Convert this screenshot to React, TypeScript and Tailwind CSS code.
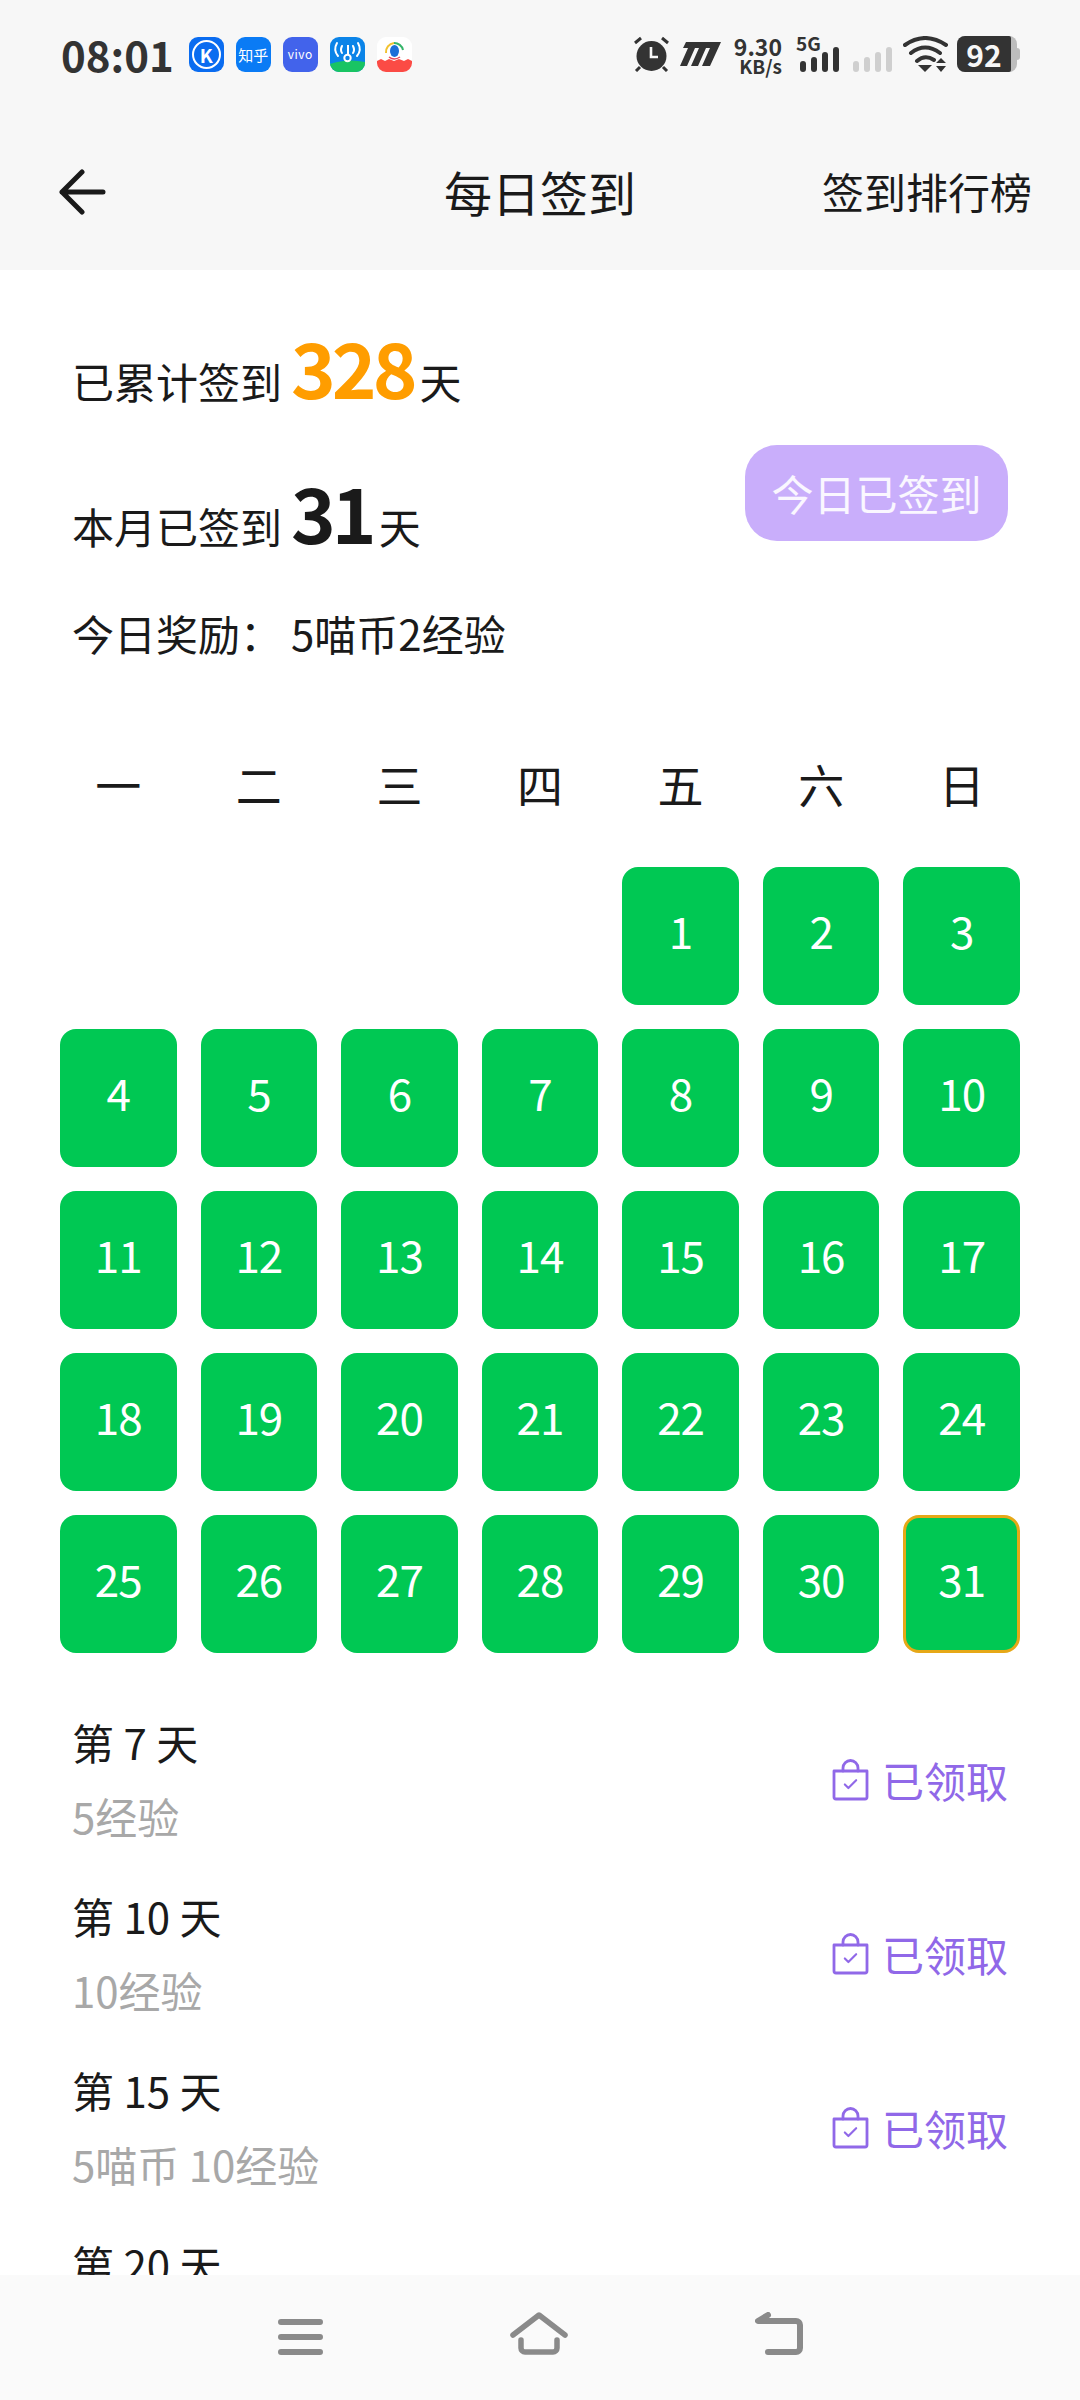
import { Check } from 'lucide-react'

const font = { fontFamily: '"Noto Sans CJK SC", "Noto Sans", sans-serif' }

const weekdays = ['一', '二', '三', '四', '五', '六', '日']
const days = Array.from({ length: 31 }, (_, i) => i + 1)

const rewards = [
  { day: 7, text: '5经验' },
  { day: 10, text: '10经验' },
  { day: 15, text: '5喵币 10经验' },
  { day: 20, text: '10喵币 10经验' },
]

function AppIcons() {
  return (
    <div className="flex items-center gap-[12px] ml-[15px]">
      <div className="w-[35px] h-[35px] rounded-[9px] bg-[#0a6cf0] flex items-center justify-center">
        <div className="w-[29px] h-[29px] rounded-full border-2 border-white flex items-center justify-center text-white text-[19px] font-bold leading-none">K</div>
      </div>
      <div className="w-[35px] h-[35px] rounded-[9px] bg-[#0a7bf5] flex items-center justify-center text-white text-[15px] leading-none whitespace-nowrap">知乎</div>
      <div className="w-[35px] h-[35px] rounded-[9px] bg-[#4263eb] flex items-center justify-center text-white text-[12px] leading-none tracking-[0.5px]">vivo</div>
      <svg width="35" height="35" viewBox="0 0 35 35">
        <rect width="35" height="35" rx="9" fill="#0b84e8" />
        <path d="M0 27 Q17 21 35 25 V26 a9 9 0 0 1 -9 9 H9 a9 9 0 0 1 -9 -9Z" fill="#19c463" />
        <path d="M7 6 Q3 13 8 19 M12 9 Q10 13 12 16 M28 6 Q32 13 27 19 M23 9 Q25 13 23 16" fill="none" stroke="#fff" strokeWidth="2" strokeLinecap="round" />
        <path d="M18 8 V18" stroke="#fff" strokeWidth="2" />
        <circle cx="17.5" cy="21" r="3.2" fill="none" stroke="#fff" strokeWidth="2" />
      </svg>
      <svg width="35" height="35" viewBox="0 0 35 35">
        <rect width="35" height="35" rx="9" fill="#fff" />
        <path d="M0 24 L4 22 L8 24 L12 22 L17 24 L22 22 L27 24 L31 22 L35 24 V26 a9 9 0 0 1 -9 9 H9 a9 9 0 0 1 -9 -9Z" fill="#fb4b45" />
        <path d="M9 16 A9 9 0 0 1 17 6" fill="none" stroke="#f2c230" strokeWidth="2" />
        <path d="M17 6 A9 9 0 0 1 26 13" fill="none" stroke="#35b56a" strokeWidth="2" />
        <ellipse cx="17.5" cy="14" rx="4.5" ry="6" fill="#1c6fd8" />
        <path d="M12 20 Q17 24 23 20" fill="none" stroke="#e8465a" strokeWidth="1.5" />
      </svg>
    </div>
  )
}

function StatusRight() {
  return (
    <div className="flex items-center text-[#333]">
      <svg width="37" height="36" viewBox="0 0 37 36" className="mr-[10px]">
        <circle cx="18.5" cy="20" r="15" fill="#333" />
        <path d="M18 11 V21 H25" fill="none" stroke="#f7f7f7" strokeWidth="2.6" />
        <path d="M2 7 L8 2 M35 7 L29 2 M7 31 L3 35 M30 31 L34 35" stroke="#333" strokeWidth="3" />
      </svg>
      <svg width="41" height="24" viewBox="0 0 41 24" className="mr-[16px]">
        <path d="M6 0 H41 L30 24 H22 L30 6 H26 L18 24 H11 L19 6 H15 L7 24 H0 L8 6 H3Z" fill="#333" />
      </svg>
      <div className="flex flex-col items-end font-bold leading-none w-[45px] mr-[17px]">
        <span className="text-[23px] h-[23px] leading-[20px]">9.30</span>
        <span className="text-[19px] h-[14px] leading-[14px]">KB/s</span>
      </div>
      <div className="relative w-[41px] h-[36px] mr-[12px]">
        <span className="absolute left-[-3px] top-[-2px] text-[19px] font-bold leading-[18px]">5G</span>
        <svg width="41" height="36" viewBox="0 0 41 36">
          <rect x="1" y="25" width="6" height="11" rx="3" fill="#333" />
          <rect x="12" y="21" width="6" height="15" rx="3" fill="#333" />
          <rect x="23" y="16" width="6" height="20" rx="3" fill="#333" />
          <rect x="34" y="11" width="6" height="25" rx="3" fill="#333" />
        </svg>
      </div>
      <svg width="41" height="36" viewBox="0 0 41 36" className="mr-[10px]">
        <rect x="1" y="25" width="6" height="11" rx="3" fill="#cfcfcf" />
        <rect x="12" y="21" width="6" height="15" rx="3" fill="#cfcfcf" />
        <rect x="23" y="16" width="6" height="20" rx="3" fill="#cfcfcf" />
        <rect x="34" y="11" width="6" height="25" rx="3" fill="#cfcfcf" />
      </svg>
      <svg width="45" height="36" viewBox="0 0 45 36" className="mr-[9px]">
        <path d="M2 9 Q22 -5 43 9 M8 17 Q22 6 37 17 M14 25 Q22 18 31 24" fill="none" stroke="#333" strokeWidth="4" strokeLinecap="round" />
        <path d="M15 29 H29 L22 36Z" fill="#333" />
        <path d="M33 27 L38 22 L43 27Z M33 30 H43 L38 36Z" fill="#333" />
      </svg>
      <div className="relative w-[60px] h-[36px] rounded-[8px] bg-[#bdbdbd] mr-[3px]">
        <div className="w-[54px] h-[36px] rounded-l-[8px] rounded-r-[2px] bg-[#333] flex items-center justify-center text-[#f7f7f7] text-[30px] font-bold leading-none">92</div>
        <div className="absolute right-[-3px] top-[12px] w-[3px] h-[12px] rounded-r-[3px] bg-[#bdbdbd]" />
      </div>
    </div>
  )
}

function Header() {
  return (
    <div className="bg-[#f7f7f7] h-[270px] shrink-0">
      <div className="h-[108px] pl-[61px] pr-[60px] flex items-center justify-between">
        <div className="flex items-center">
          <span className="text-[42px] font-bold leading-none text-[#333]">08:01</span>
          <AppIcons />
        </div>
        <StatusRight />
      </div>
      <div className="relative h-[162px] pt-[3px] flex items-center justify-between pl-[58px] pr-[48px]">
        <svg width="48" height="46" viewBox="0 0 48 46" className="mt-[2px]">
          <path d="M24 3 L4 23 L24 43 M4 23 H45" fill="none" stroke="#1a1a1a" strokeWidth="5" strokeLinecap="round" strokeLinejoin="round" />
        </svg>
        <span className="absolute left-0 right-0 text-center text-[48px] leading-none text-[#1a1a1a]">每日签到</span>
        <span className="text-[42px] leading-none text-[#1a1a1a]">签到排行榜</span>
      </div>
    </div>
  )
}

function Summary() {
  return (
    <div className="flex items-center justify-between pl-[72px] pr-[72px] pt-[58px]">
      <div className="text-[#1a1a1a] text-[42px] leading-none">
        <div className="flex items-baseline h-[94px]">
          <span>已累计签到</span>
          <span className="text-[#ff9d00] text-[76px] font-bold ml-[9px] mr-[6px] tracking-[-4px]">328</span>
          <span>天</span>
        </div>
        <div className="flex items-baseline h-[94px] mt-[51px]">
          <span>本月已签到</span>
          <span className="text-[76px] font-bold ml-[9px] mr-[6px] tracking-[-4px]">31</span>
          <span>天</span>
        </div>
        <div className="flex items-center mt-[42px] h-[48px]">
          <span>今日奖励：</span>
          <span className="ml-[9px]">5喵币2经验</span>
        </div>
      </div>
      <div className="w-[263px] h-[96px] rounded-[32px] bg-[#c9aefb] flex items-center justify-center text-white/90 text-[42px] leading-none">
        今日已签到
      </div>
    </div>
  )
}

function Calendar() {
  return (
    <div className="px-[60px] pt-[96px]">
      <div className="grid grid-cols-7 gap-x-[24px] h-[114px]">
        {weekdays.map((d) => (
          <div key={d} className="text-center text-[46px] leading-[60px] text-[#1a1a1a]">{d}</div>
        ))}
      </div>
      <div className="grid grid-cols-7 gap-x-[24px] gap-y-[24px]">
        {[0, 1, 2, 3].map((i) => <div key={i} />)}
        {days.map((d) => (
          <div
            key={d}
            className={`h-[138px] rounded-[16px] bg-[#00c853] flex items-center justify-center pb-[12px] text-white text-[44px] tracking-[-1px] ${
              d === 31 ? 'border-[3px] border-[#e6a817]' : ''
            }`}
          >
            {d}
          </div>
        ))}
      </div>
    </div>
  )
}

function RewardList() {
  return (
    <div className="pl-[72px] pr-[72px] pt-[64px]">
      {rewards.map((r) => (
        <div key={r.day} className="h-[174px] flex justify-between shrink-0">
          <div>
            <div className="text-[42px] leading-[50px] h-[74px] text-[#1a1a1a]">第 {r.day} 天</div>
            <div className="text-[42px] leading-[50px] text-[#a8a8a8]">{r.text}</div>
          </div>
          <div className="flex items-center gap-[13px] h-[125px] text-[42px] leading-none text-[#9068e8]">
            <svg width="37" height="42" viewBox="0 0 37 42" fill="none" stroke="#9068e8" strokeWidth="2.8" strokeLinejoin="round" strokeLinecap="round">
              <path d="M2 12 H35 V38 a2 2 0 0 1 -2 2 H4 a2 2 0 0 1 -2 -2Z" />
              <path d="M11 12 V9 a7.5 7.5 0 0 1 15 0 V12" />
              <Check x="10" y="17" width="17" height="17" strokeWidth="3" />
            </svg>
            已领取
          </div>
        </div>
      ))}
    </div>
  )
}

function BottomNav() {
  return (
    <div className="h-[125px] shrink-0 bg-[#fafafa] flex items-start justify-center gap-[187px] pt-[37px]">
      <svg width="45" height="43" viewBox="0 0 45 43" fill="none" stroke="#8a8a8a" strokeWidth="6" strokeLinecap="round">
        <path d="M3 10 H42 M3 25 H42 M3 40 H42" />
      </svg>
      <svg width="58" height="43" viewBox="0 0 58 43" fill="none" stroke="#8a8a8a" strokeWidth="5.5" strokeLinecap="round" strokeLinejoin="round">
        <path d="M3 23 L29 3 L55 23" />
        <path d="M11 28 V36 a4 4 0 0 0 4 4 H43 a4 4 0 0 0 4 -4 V28" />
      </svg>
      <svg width="48" height="43" viewBox="0 0 48 43" fill="none" stroke="#8a8a8a" strokeWidth="6" strokeLinecap="round" strokeLinejoin="round">
        <path d="M13 3 L3 9 H41 a4 4 0 0 1 4 4 V36 a4 4 0 0 1 -4 4 H13" />
      </svg>
    </div>
  )
}

export default function App() {
  return (
    <div className="w-[1080px] h-[2400px] flex flex-col bg-white overflow-hidden" style={font}>
      <Header />
      <div className="flex-1 min-h-0 overflow-hidden">
        <Summary />
        <Calendar />
        <RewardList />
      </div>
      <BottomNav />
    </div>
  )
}
